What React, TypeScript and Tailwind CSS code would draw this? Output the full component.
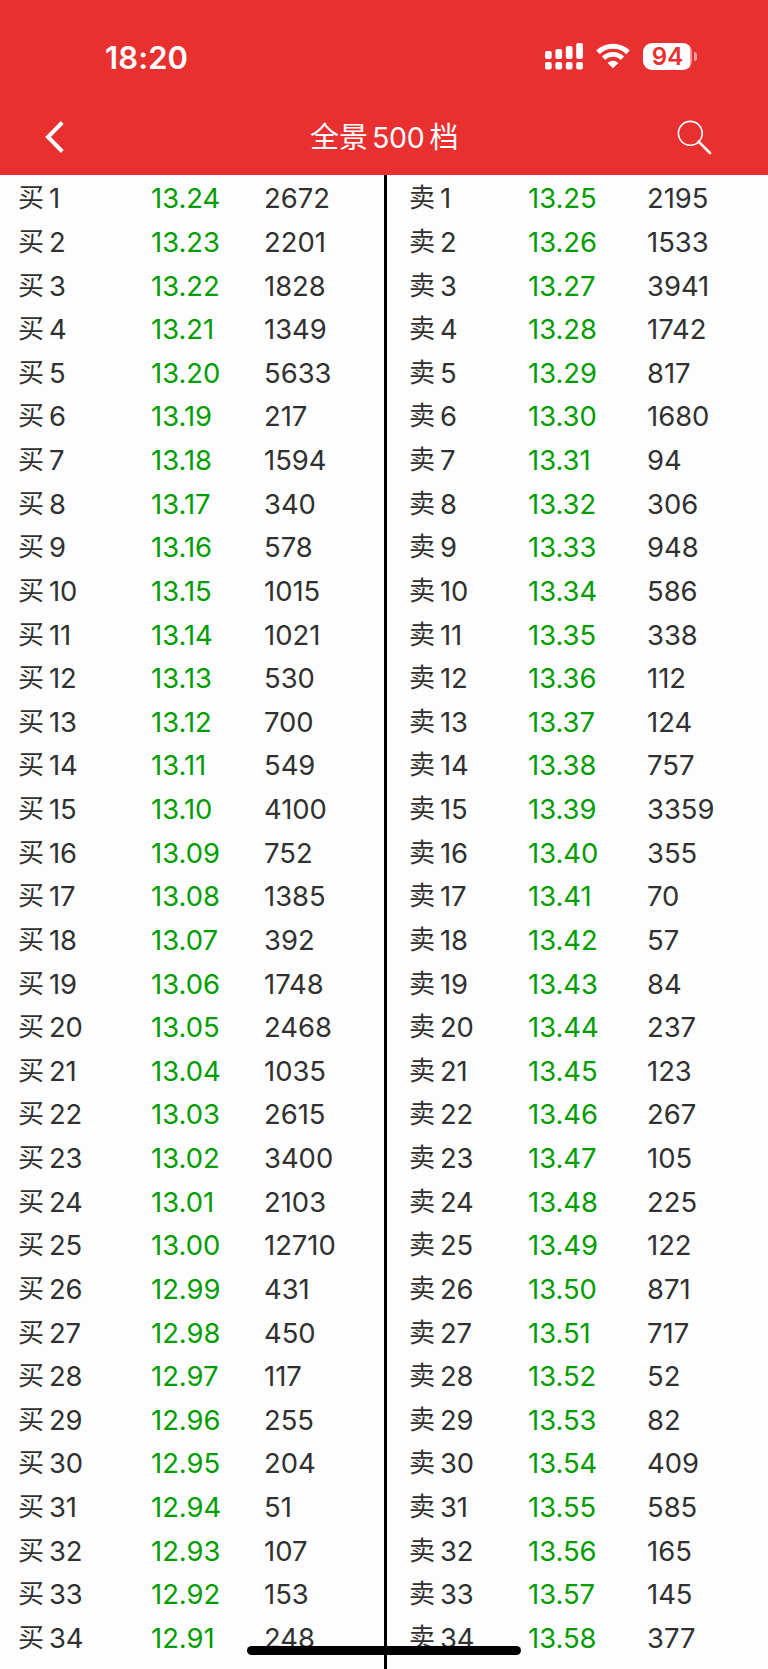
type Level = [price: string, volume: number];

const BIDS: Level[] = [
  ['13.24', 2672], ['13.23', 2201], ['13.22', 1828], ['13.21', 1349], ['13.20', 5633],
  ['13.19', 217], ['13.18', 1594], ['13.17', 340], ['13.16', 578], ['13.15', 1015],
  ['13.14', 1021], ['13.13', 530], ['13.12', 700], ['13.11', 549], ['13.10', 4100],
  ['13.09', 752], ['13.08', 1385], ['13.07', 392], ['13.06', 1748], ['13.05', 2468],
  ['13.04', 1035], ['13.03', 2615], ['13.02', 3400], ['13.01', 2103], ['13.00', 12710],
  ['12.99', 431], ['12.98', 450], ['12.97', 117], ['12.96', 255], ['12.95', 204],
  ['12.94', 51], ['12.93', 107], ['12.92', 153], ['12.91', 248],
];

const ASKS: Level[] = [
  ['13.25', 2195], ['13.26', 1533], ['13.27', 3941], ['13.28', 1742], ['13.29', 817],
  ['13.30', 1680], ['13.31', 94], ['13.32', 306], ['13.33', 948], ['13.34', 586],
  ['13.35', 338], ['13.36', 112], ['13.37', 124], ['13.38', 757], ['13.39', 3359],
  ['13.40', 355], ['13.41', 70], ['13.42', 57], ['13.43', 84], ['13.44', 237],
  ['13.45', 123], ['13.46', 267], ['13.47', 105], ['13.48', 225], ['13.49', 122],
  ['13.50', 871], ['13.51', 717], ['13.52', 52], ['13.53', 82], ['13.54', 409],
  ['13.55', 585], ['13.56', 165], ['13.57', 145], ['13.58', 377],
];

export default function App() {
  return (
    <div className="relative w-[768px] h-[1669px] overflow-hidden flex flex-col bg-[#fdfdfd] font-['Inter','Noto_Sans_CJK_SC',sans-serif] text-[#303030]">
      <header className="h-[175px] shrink-0 bg-[#e83030] text-white">
        <StatusBar />
        <NavBar />
      </header>
      <main className="flex-1 min-h-0 flex">
        <div className="w-[384px] pl-[18px]">
          {BIDS.map(([price, volume], i) => (
            <Row key={price} side="买" n={i + 1} price={price} volume={volume} cols="grid-cols-[133px_113px_1fr]" />
          ))}
        </div>
        <div className="w-[2.5px] bg-black" />
        <div className="flex-1 pl-[22.5px]">
          {ASKS.map(([price, volume], i) => (
            <Row key={price} side="卖" n={i + 1} price={price} volume={volume} cols="grid-cols-[119px_119px_1fr]" />
          ))}
        </div>
      </main>
      {/* home indicator */}
      <div className="absolute left-[247px] top-[1646px] w-[274px] h-[8.5px] rounded-full bg-black" />
    </div>
  );
}

function Row({ side, n, price, volume, cols }: { side: string; n: number; price: string; volume: number; cols: string }) {
  return (
    <div className={'grid items-center h-[43.64px] pt-[3px] text-[27.4px] leading-[40px] whitespace-nowrap ' + cols}>
      <div className="flex items-center">
        <span className="w-[31px] text-[26px]">{side}</span>
        <span className="tracking-[-0.2px]">{n}</span>
      </div>
      <span className="text-[#009c00]">{price}</span>
      <span>{volume}</span>
    </div>
  );
}

function StatusBar() {
  return (
    <div className="h-[113px] pl-[105px] pr-[71px] flex items-center justify-between">
      <span className="text-[31px] leading-none tracking-[0.1px] font-semibold pt-px">18:20</span>
      <div className="flex items-center">
        <svg width="38" height="27" viewBox="0 0 38 27" fill="currentColor">
          <rect x="0" y="8" width="6.7" height="8" rx="2" />
          <rect x="10.4" y="6" width="6.7" height="10" rx="2" />
          <rect x="20.8" y="3" width="6.7" height="13" rx="2" />
          <rect x="31.2" y="0" width="6.7" height="16" rx="2" />
          <rect x="0" y="19" width="6.7" height="7.4" rx="2" />
          <rect x="10.4" y="19" width="6.7" height="7.4" rx="2" />
          <rect x="20.8" y="19" width="6.7" height="7.4" rx="2" />
          <rect x="31.2" y="19" width="6.7" height="7.4" rx="2" />
        </svg>
        <svg className="ml-[13px]" width="34" height="27" viewBox="0 0 34 27" fill="none">
          <path d="M2 9.4A21.5 21.5 0 0 1 32 9.4" stroke="currentColor" strokeWidth="5" />
          <path d="M7.6 15.2A13.4 13.4 0 0 1 26.4 15.2" stroke="currentColor" strokeWidth="4.8" />
          <path d="M17 25.3L11.6 20Q17 15.6 22.4 20Z" fill="currentColor" />
        </svg>
        <div className="ml-[13px] flex items-center">
          <div className="w-[49px] h-[27px] rounded-[9px] bg-[linear-gradient(to_right,#fff_47px,#f59b9b_47px)] text-[#e83030] text-center text-[24px] leading-[27px] font-semibold">94</div>
          <div className="ml-[2px] w-[3px] h-[9px] rounded-r-full bg-[#f59b9b]" />
        </div>
      </div>
    </div>
  );
}

function NavBar() {
  return (
    <div className="h-[48px] pl-[45px] pr-[56px] grid grid-cols-[265px_1fr_35px] items-center">
      <svg width="20" height="32" viewBox="0 0 20 32" fill="none" stroke="currentColor" strokeWidth="4">
        <path d="M17.3 1.5L3 16L17.3 30.5" />
      </svg>
      <h1 className="flex items-center text-[29px] leading-[40px] pt-px">
        <span>全景</span>
        <span className="ml-[4px] mr-[5px] text-[28.5px] tracking-[-0.3px]">500</span>
        <span>档</span>
      </h1>
      <svg width="35" height="35" viewBox="0 0 35 35" fill="none" stroke="currentColor">
        <circle cx="13.3" cy="13.3" r="11.9" strokeWidth="1.6" />
        <path d="M21.6 21.6L33 33" strokeWidth="2.6" strokeLinecap="round" />
      </svg>
    </div>
  );
}
